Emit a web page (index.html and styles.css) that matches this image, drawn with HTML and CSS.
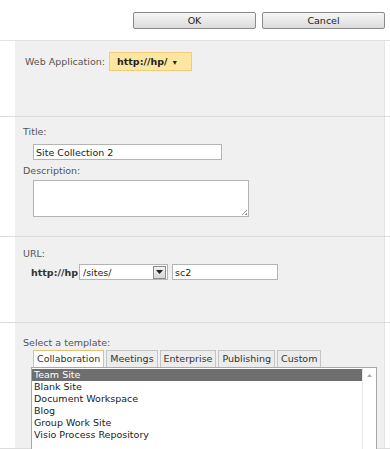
FILE: index.html
```html
<!DOCTYPE html>
<html lang="en">
<head>
  <meta charset="UTF-8">
  <title>Create Site Collection</title>
  <link rel="stylesheet" href="styles.css">
</head>
<body>
  <div class="toolbar">
    <button class="btn">OK</button>
    <button class="btn">Cancel</button>
  </div>

  <!-- Web application -->
  <div class="section sec-app">
    <div class="panel">
      <div class="app-row">
        <span class="label">Web Application:</span>
        <span class="app-pick">http://hp/ <span class="caret">&#9662;</span></span>
      </div>
    </div>
  </div>

  <!-- Title and description -->
  <div class="section sec-title">
    <div class="panel">
      <div class="label">Title:</div>
      <input class="field title-input" type="text" value="Site Collection 2">
      <div class="label desc-label">Description:</div>
      <div class="textarea"><span class="grip"></span></div>
    </div>
  </div>

  <!-- URL -->
  <div class="section sec-url">
    <div class="panel">
      <div class="label">URL:</div>
      <div class="url-row">
        <b class="host">http://hp</b>
        <div class="combo">
          <span>/sites/</span>
          <span class="combo-btn">
            <svg width="7" height="4" viewBox="0 0 7 4"><path d="M0 0h7L3.5 4z" fill="#222"/></svg>
          </span>
        </div>
        <input class="field url-input" type="text" value="sc2">
      </div>
    </div>
  </div>

  <!-- Template -->
  <div class="section sec-template">
    <div class="panel">
      <div class="label">Select a template:</div>
      <div class="tabs">
        <span class="tab active">Collaboration</span>
        <span class="tab">Meetings</span>
        <span class="tab">Enterprise</span>
        <span class="tab">Publishing</span>
        <span class="tab">Custom</span>
      </div>
      <div class="listbox">
        <ul class="items">
          <li class="selected">Team Site</li>
          <li>Blank Site</li>
          <li>Document Workspace</li>
          <li>Blog</li>
          <li>Group Work Site</li>
          <li>Visio Process Repository</li>
        </ul>
        <div class="scrollbar">
          <svg width="5" height="3" viewBox="0 0 5 3"><path d="M0 3h5L2.5 0z" fill="#aaa"/></svg>
        </div>
      </div>
    </div>
  </div>
</body>
</html>
```

FILE: styles.css
```css
* {
  box-sizing: border-box;
}

body {
  margin: 0;
  font-family: "DejaVu Sans", Verdana, sans-serif;
  font-size: 9.5px;
  color: #333;
  background: #fff;
}

.toolbar {
  height: 41px;
  display: flex;
  justify-content: flex-end;
  gap: 6px;
  padding: 12px 5px 0 0;
  border-bottom: 1px solid #e2e2e2;
}

.btn {
  width: 123px;
  height: 17px;
  font-family: inherit;
  font-size: 9.5px;
  color: #222;
  background: linear-gradient(#f6f6f6, #dcdcdc);
  border: 1px solid #8a8a8a;
  border-radius: 2px;
  padding: 0;
}

.section {
  padding: 0 5px 0 15px;
  border-bottom: 1px solid #dcdcdc;
}

.panel {
  background: #f0f0f0;
  padding-left: 8px;
  border-right: 1px solid #e4e4e4;
}

.label {
  color: #555;
  line-height: 12px;
}

/* web application */
.sec-app .panel {
  height: 75px;
  padding-top: 11px;
  padding-left: 10px;
}

.app-row {
  display: flex;
  align-items: center;
  gap: 4px;
}

.app-pick {
  width: 83px;
  height: 19px;
  line-height: 17px;
  padding-left: 7px;
  background: #fde6a0;
  border: 1px solid #f1cc7a;
  font-weight: bold;
  color: #222;
}

.caret {
  font-size: 8px;
  margin-left: 2px;
}

/* title */
.sec-title .panel {
  height: 119px;
  padding-top: 9px;
}

.field {
  display: block;
  height: 16px;
  font-family: inherit;
  font-size: 9.5px;
  color: #222;
  border: 1px solid #b4b4b4;
  background: #fff;
  padding: 0 2px;
  outline: none;
}

.title-input {
  width: 189px;
  margin: 6px 0 0 10px;
}

.desc-label {
  margin-top: 5px;
}

.textarea {
  position: relative;
  width: 216px;
  height: 37px;
  margin: 3px 0 0 10px;
  background: #fff;
  border: 1px solid #b4b4b4;
}

.grip {
  position: absolute;
  right: 1px;
  bottom: 1px;
  width: 5px;
  height: 5px;
  background: linear-gradient(135deg, transparent 45%, #999 45%, #999 55%, transparent 55%, transparent 75%, #999 75%);
}

/* url */
.sec-url .panel {
  height: 85px;
  padding-top: 11px;
}

.url-row {
  display: flex;
  align-items: center;
  margin: 4px 0 0 8px;
}

.host {
  color: #333;
  margin-right: 1px;
}

.combo {
  display: flex;
  justify-content: space-between;
  align-items: center;
  width: 89px;
  height: 16px;
  padding-left: 3px;
  background: #fff;
  border: 1px solid #b4b4b4;
  color: #222;
}

.combo-btn {
  display: flex;
  align-items: center;
  justify-content: center;
  width: 13px;
  height: 13px;
  margin-right: 1px;
  background: linear-gradient(#f4f4f4, #d6d6d6);
  border: 1px solid #8c8c8c;
}

.url-input {
  width: 106px;
  margin-left: 4px;
}

/* template */
.sec-template .panel {
  height: 125px;
  padding-top: 14px;
}

.tabs {
  display: flex;
  gap: 2px;
  margin: 1px 0 0 10px;
  height: 17px;
}

.tab {
  height: 17px;
  line-height: 15px;
  padding: 0 3px;
  color: #333;
  background: #ececec;
  border: 1px solid #c4c4c4;
  border-bottom: none;
}

.tab.active {
  background: #fff;
  border-color: #e8c070;
}

.listbox {
  display: flex;
  width: 346px;
  height: 90px;
  margin-left: 8px;
  background: #fff;
  border: 1px solid #a8a8a8;
}

.items {
  flex: 1;
  list-style: none;
  margin: 0;
  padding: 1px 0 0 0;
}

.items li {
  line-height: 12px;
  padding-left: 2px;
  color: #222;
}

.items li.selected {
  background: #6e6e6e;
  color: #fff;
}

.scrollbar {
  width: 14px;
  padding-top: 6px;
  display: flex;
  justify-content: center;
  align-items: flex-start;
  border-left: 1px solid #e6e6e6;
}
```
